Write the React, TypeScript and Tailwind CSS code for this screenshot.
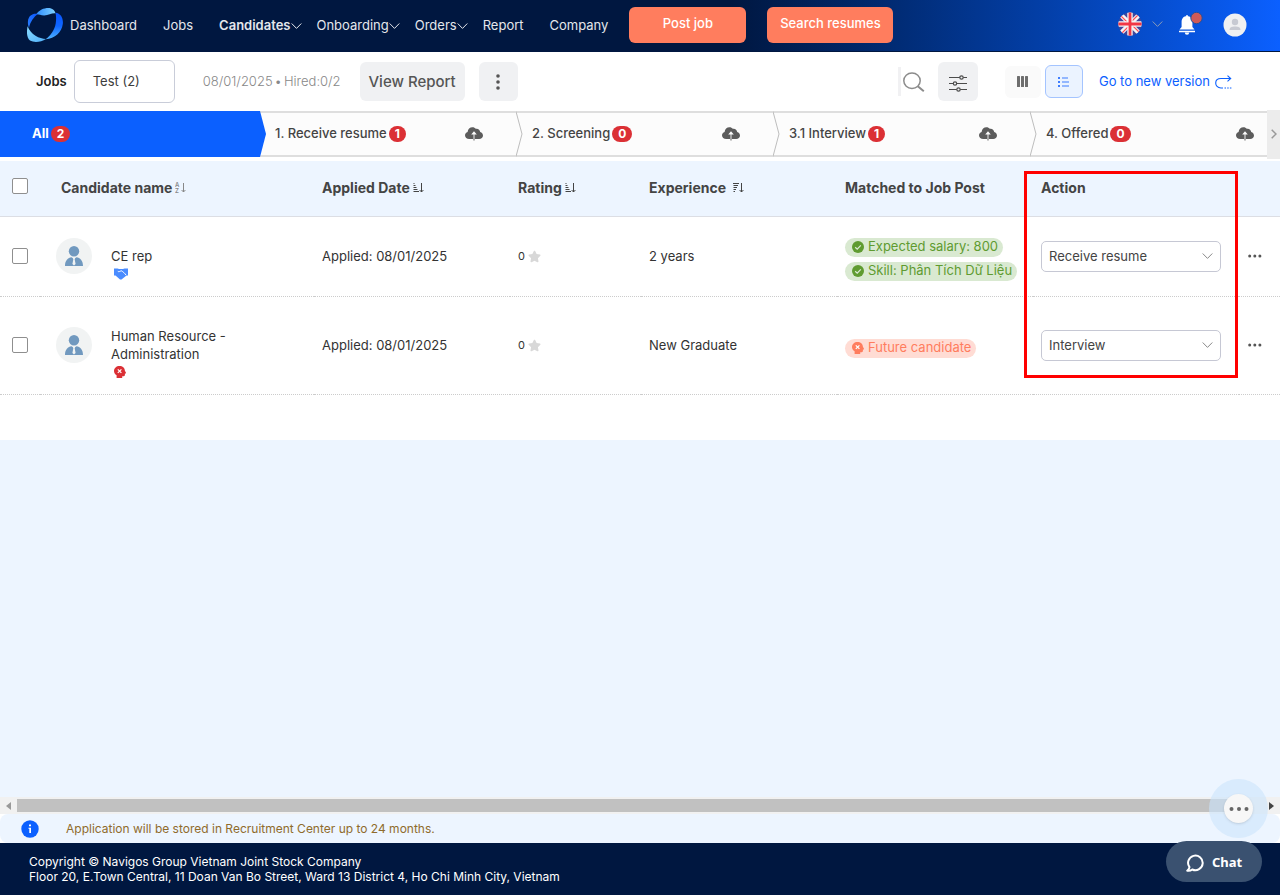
import React from "react";
import { FaStar } from "react-icons/fa";

function Chevron({ className = "" }: { className?: string }) {
  return (
    <svg viewBox="0 0 11 8" className={"h-2 w-[11px] shrink-0 " + className} fill="none" stroke="currentColor" strokeWidth="1">
      <path d="M0.7 1.5 L5.5 6.4 L10.3 1.5" />
    </svg>
  );
}

function Logo() {
  return (
    <svg viewBox="0 0 36 34" className="mb-px h-[34px] w-9 shrink-0">
      <defs>
        <linearGradient id="lgA" x1="0" x2="1" y1="0" y2="0">
          <stop offset="0" stopColor="#2f8dff" />
          <stop offset="1" stopColor="#7fd3ff" />
        </linearGradient>
        <linearGradient id="lgB" x1="0" x2="0" y1="0" y2="1">
          <stop offset="0" stopColor="#0a55ff" />
          <stop offset="0.5" stopColor="#0f66ff" />
          <stop offset="1" stopColor="#4fb4ff" />
        </linearGradient>
        <linearGradient id="lgC" x1="0" x2="1" y1="0" y2="1">
          <stop offset="0" stopColor="#8adcff" />
          <stop offset="1" stopColor="#4fb0fb" />
        </linearGradient>
        <linearGradient id="lgD" x1="1" x2="0" y1="0" y2="1">
          <stop offset="0" stopColor="#0b57ff" />
          <stop offset="1" stopColor="#2a80ff" />
        </linearGradient>
      </defs>
      <path d="M9.300 6.300C12.500 1.500 18 -0.500 23.500 0.200C26 0.700 27.800 2.800 28.600 5.400C25 4.800 21.500 7.600 17 7.500C13.500 7.400 11.500 6 9.300 6.300Z" fill="url(#lgA)" />
      <path d="M28.400 4.800C34 5.300 36.500 10.500 35.800 16C34.800 24 28 30.800 18.500 31.300C23.500 28 27.600 22 28.700 15.500C29.300 11.500 29.300 7.500 28.400 4.800Z" fill="url(#lgB)" />
      <path d="M0.600 18.300C2.300 22.500 5 25.500 8.500 27.800C12 30 15.500 30.800 19 31C14 34.200 7 34.800 3 32.500C-0.500 30 -0.500 23.500 0.600 18.300Z" fill="url(#lgC)" />
      <path d="M10.800 6C6.800 9 3.200 14 2 19.800C0.200 15.500 0.600 10.500 3.300 7.800C5.500 5.700 8.500 5.300 10.800 6Z" fill="url(#lgD)" />
    </svg>
  );
}

function Flag() {
  return (
    <svg viewBox="0 0 24 24" className="size-6 shrink-0">
      <clipPath id="flagClip">
        <circle cx="12" cy="12" r="11.600" />
      </clipPath>
      <g clipPath="url(#flagClip)">
        <rect width="24" height="24" fill="#41479b" />
        <path d="M0 0L24 24M24 0L0 24" stroke="#f5f5f5" strokeWidth="4.600" />
        <path d="M0 1L12 13M24 23L12 11M23 0L11 12M1 24L13 12" stroke="#ff4b55" strokeWidth="1.100" />
        <path d="M12 0V24M0 12H24" stroke="#f5f5f5" strokeWidth="5.400" />
        <path d="M12 0V24M0 12H24" stroke="#f23645" strokeWidth="2.800" />
      </g>
    </svg>
  );
}

function Bell() {
  return (
    <svg viewBox="0 0 26 24" className="h-6 w-[26px] shrink-0">
      <path d="M9 4C5.500 4 3.600 6.800 3.600 10V15L1.500 17.500H16.500L14.400 15V10C14.400 6.800 12.500 4 9 4Z" fill="#fff" />
      <path d="M7.800 4.500A1.200 1.500 0 0 1 10.200 4.500Z" fill="#fff" />
      <path d="M1 19.500H17" stroke="#fff" strokeWidth="1.500" />
      <path d="M6.800 20.500H11.200A2.200 2.200 0 0 1 6.800 20.500Z" fill="#fff" />
      <circle cx="18.500" cy="6" r="5.700" fill="#cf5a58" stroke="#23509c" strokeWidth="1" />
    </svg>
  );
}

function CloudUp() {
  return (
    <svg viewBox="0 0 18 14" className="h-[14px] w-[18px] shrink-0" fill="#5c5c5c">
      <path d="M4.200 12C1.800 12 0 10.500 0 8.300C0 6.600 1.100 5.300 2.600 4.900C2.900 2.200 4.800 0.300 7.400 0.300C9 0.300 10 1 10.800 1.800C13 1.300 14.900 2.700 15.200 4.900C16.900 5.400 18 6.800 18 8.500C18 10.600 16.300 12 14.200 12Z" />
      <path d="M9 4.300L11.800 7.400H9.900V12H8.100V7.400H6.200Z" fill="#fcfcfc" />
      <rect x="8.500" y="7.500" width="1" height="6" />
    </svg>
  );
}

function Handshake() {
  return (
    <svg viewBox="0 0 14 12" className="ml-[3px] h-3 w-[14px] shrink-0">
      <path d="M0 0.500H3.500L5 1H9L10.500 0.500H14V7.500H12.500L7.500 11.500H6L1.500 7.500H0Z" fill="#4a8cff" />
      <path d="M3.800 3.300C5 4.300 6.300 3 7.300 2.800C8.500 3.200 11 5.500 12 7" fill="none" stroke="#fff" strokeWidth="1" />
    </svg>
  );
}

function HeadX({ className = "" }: { className?: string }) {
  return (
    <svg viewBox="0 0 12 12" className={"size-3 shrink-0 " + className}>
      <path d="M5.500 0C8.600 0 10.800 2 10.900 4.700L12 6.800C12.100 7.200 11.900 7.400 11.500 7.400H10.900V9C10.900 9.700 10.400 10.200 9.700 10.200H8.200V12H2.600V9.300C1 8.300 0 6.900 0 5C0 2.100 2.400 0 5.500 0Z" fill="currentColor" />
      <path d="M3.800 3.300L7.400 6.900M7.400 3.300L3.800 6.900" stroke="#fff" strokeWidth="1.200" />
    </svg>
  );
}

function CheckCircle() {
  return (
    <svg viewBox="0 0 12 12" className="size-3 shrink-0">
      <circle cx="6" cy="6" r="6" fill="#5f9b30" />
      <path d="M3.200 6.200L5.200 8.100L8.800 4.300" fill="none" stroke="#dcebd5" strokeWidth="1.200" />
    </svg>
  );
}

type SortKind = "alpha" | "asc" | "desc";

function SortIcon({ kind }: { kind: SortKind }) {
  return (
    <svg viewBox="0 0 11 11" className="size-[11px] shrink-0" stroke="currentColor" fill="none" strokeWidth="1">
      {kind === "alpha" && (
        <g stroke="none" fill="currentColor" fontFamily="Inter, sans-serif" fontSize="6" fontWeight="600">
          <text x="0" y="5">A</text>
          <text x="0" y="11">Z</text>
        </g>
      )}
      {kind === "asc" && <path d="M0.500 1.500H1.500M0.500 3.500H2.500M0.500 5.500H3.500M0.500 7.500H4.500M0.500 9.500H6" />}
      {kind === "desc" && <path d="M0 1.500H6M0.500 3.500H5M0.500 5.500H4M0.500 7.500H3M0.500 9.500H2" />}
      <path d="M8.500 1V10M6.600 8L8.500 10L10.400 8" />
    </svg>
  );
}

function Avatar() {
  return (
    <svg viewBox="0 0 36 36" className="size-9 shrink-0">
      <circle cx="18" cy="18" r="18" fill="#f1f3f3" />
      <circle cx="18" cy="13.200" r="5.200" fill="#7199bf" />
      <path d="M9 28C9 22.500 12 19.800 15.500 19.300L18 21L20.500 19.300C24 19.800 27 22.500 27 28Z" fill="#7199bf" />
      <path d="M17 20H19L18.700 21.500L19.600 26L18 27.500L16.400 26L17.300 21.500Z" fill="#f1f3f3" />
    </svg>
  );
}

function Dots() {
  return (
    <svg viewBox="0 0 14 4" className="h-1 w-[14px]" fill="#555">
      <circle cx="1.700" cy="2" r="1.500" />
      <circle cx="6.800" cy="2" r="1.500" />
      <circle cx="11.900" cy="2" r="1.500" />
    </svg>
  );
}

const nav = [
  { label: "Dashboard" },
  { label: "Jobs" },
  { label: "Candidates", menu: true, active: true },
  { label: "Onboarding", menu: true },
  { label: "Orders", menu: true },
  { label: "Report" },
  { label: "Company" },
];

function Header() {
  return (
    <header className="flex h-13 items-center border-b border-[#001740] bg-linear-to-r from-[#001740] from-57% to-[#0b60ff] to-100% pr-[33px] pl-[27px] text-[13px] text-[#e4e7ec]">
      <Logo />
      <nav className="ml-[7px] flex items-center gap-[26px]">
        {nav.map((n) => (
          <a key={n.label} href="#" className={n.active ? "flex items-center font-semibold" : "flex items-center"}>
            {n.label}
            {n.menu && <Chevron className="-mr-[11px]" />}
          </a>
        ))}
      </nav>
      <div className="ml-[21px] flex gap-[21px] pb-[2px] font-medium text-white">
        <button className="h-9 w-[117px] rounded-md bg-[#ff7d5e] pb-[2px]">Post job</button>
        <button className="h-9 w-[126px] rounded-md bg-[#ff7d5e] pb-[2px]">Search resumes</button>
      </div>
      <div className="ml-auto flex items-center">
        <button aria-label="Language" className="flex items-center gap-[10px] pb-1 text-[#8c9cb8]">
          <Flag />
          <Chevron />
        </button>
        <button aria-label="Notifications" className="ml-[15px] pb-1">
          <Bell />
        </button>
        <button aria-label="Account" className="ml-[19px] pb-[2px]">
          <svg viewBox="0 0 24 24" className="size-6">
            <circle cx="12" cy="12" r="11.500" fill="#f0f1f2" />
            <circle cx="12" cy="9" r="3.200" fill="#c7cad2" />
            <path d="M6.500 17C6.500 14 9 13.500 12 13.500S17.500 14 17.500 17Z" fill="#c7cad2" />
          </svg>
        </button>
      </div>
    </header>
  );
}

function Toolbar() {
  return (
    <div className="flex h-[59px] items-center pr-12 pl-9 text-[13px] text-[#3c3c3c]">
      <span className="font-semibold text-[#222]">Jobs</span>
      <button className="ml-[7px] h-[43px] w-[101px] rounded-md border border-[#c9cdd9] pl-[18px] text-left">Test (2)</button>
      <span className="ml-7 flex gap-[2px] font-light text-[#888]">
        <span>08/01/2025</span>
        <span>•</span>
        <span>Hired:0/2</span>
      </span>
      <button className="ml-[19px] h-[39px] w-[105px] rounded-md bg-[#f0f1f3] pt-px text-[15px] font-medium text-[#555]">View Report</button>
      <button aria-label="More" className="ml-[14px] flex h-[39px] w-[39px] items-center justify-center rounded-md bg-[#f0f1f3]">
        <svg viewBox="0 0 4 16" className="h-4 w-1" fill="#555">
          <circle cx="2" cy="2" r="1.800" />
          <circle cx="2" cy="8" r="1.800" />
          <circle cx="2" cy="14" r="1.800" />
        </svg>
      </button>
      <div className="ml-auto flex items-center">
        <span className="h-[29px] w-[3px] bg-[#f1f1f3]" />
        <button aria-label="Search" className="ml-[2px]">
          <svg viewBox="0 0 22 20" className="h-5 w-[22px]" fill="none" stroke="#8c8c8c" strokeWidth="1.500">
            <ellipse cx="9" cy="8.700" rx="8.200" ry="7.800" />
            <path d="M14.800 14.300L20.800 19.200" strokeWidth="2" />
          </svg>
        </button>
        <button aria-label="Filter" className="ml-[13px] flex h-[39px] w-10 items-center justify-center rounded-md bg-[#f0f1f3]">
          <svg viewBox="0 0 18 17" className="mt-[3px] h-[17px] w-[18px]" fill="#f0f1f3" stroke="#4c4c4c" strokeWidth="1.200">
            <path d="M0 2.500H18M0 8.500H18M0 14.500H18" />
            <circle cx="12.500" cy="2.500" r="1.700" />
            <circle cx="6" cy="8.500" r="1.700" />
            <circle cx="9.500" cy="14.500" r="1.700" />
          </svg>
        </button>
        <button aria-label="Board view" className="ml-[27px] flex h-8 w-9 items-center justify-center rounded-md bg-[#fafafa]">
          <svg viewBox="0 0 11 11" className="size-[11px]" fill="#6e6e6e">
            <rect width="3" height="11" rx="0.500" />
            <rect x="4" width="3" height="11" rx="0.500" />
            <rect x="8" width="3" height="11" rx="0.500" />
          </svg>
        </button>
        <button aria-label="List view" className="ml-1 flex h-[33px] w-[38px] items-center justify-center rounded-md border border-[#a4c4ff] bg-[#ebf3ff]">
          <svg viewBox="0 0 11 10" className="h-[10px] w-[11px]" fill="#3d7dff">
            <rect width="2" height="2" />
            <rect y="4" width="2" height="2" />
            <rect y="8" width="2" height="2" />
            <path d="M4 0.500H10V1.500H4ZM4 4.500H11V5.500H4ZM4 8.500H11V9.500H4Z" />
          </svg>
        </button>
        <a href="#" className="ml-4 flex items-center gap-[5px] text-[#0b60ff]">
          Go to new version
          <svg viewBox="0 0 17 14" className="h-[14px] w-[17px]" fill="none" stroke="#0b60ff" strokeWidth="1.100">
            <path d="M15.500 3.500H6C2.500 3.500 0.700 5.500 0.700 8C0.700 10.500 2.500 13 6 13H8" />
            <path d="M12.500 0.700L15.700 3.500L12.500 6.300" />
            <path d="M9.500 13H17" strokeDasharray="1.500 1.200" />
          </svg>
        </a>
      </div>
    </div>
  );
}

function Badge({ children }: { children: React.ReactNode }) {
  return (
    <span className="ml-[2px] inline-flex h-4 items-center rounded-full bg-[#db3035] px-[6px] text-[12px] font-bold text-white">
      {children}
    </span>
  );
}

const stages = [
  { label: "1. Receive resume", count: 1 },
  { label: "2. Screening", count: 0 },
  { label: "3.1 Interview", count: 1 },
  { label: "4. Offered", count: 0 },
];

function Stages() {
  return (
    <div className="flex h-[46px] items-center text-[13px] font-medium text-[#444]">
      <div className="flex h-full min-w-0 flex-1 overflow-hidden">
        <button className="flex h-full w-[259px] shrink-0 items-center bg-[#0b60ff] pl-8 font-bold text-white">
          All <Badge>2</Badge>
        </button>
        {stages.map((s, i) => (
          <div key={s.label} className="flex w-[257px] shrink-0 items-center border-y-2 border-[#dedede] bg-[#fcfcfc]">
            <svg viewBox="0 0 7 46" className="-my-0.5 h-[46px] w-[7px] shrink-0">
              {i === 0 ? <path d="M0 0H1L7 23L1 46H0Z" fill="#0b60ff" /> : <path d="M0 0.500L6 23L0 45.500" fill="none" stroke="#bdbdbd" />}
            </svg>
            <span className="ml-[9px]">{s.label}</span>
            <Badge>{s.count}</Badge>
            <button aria-label={"Upload to " + s.label} className="mr-[33px] ml-auto">
              <CloudUp />
            </button>
          </div>
        ))}
      </div>
      <button aria-label="Next stages" className="-my-1 flex h-[49px] w-[13px] items-center justify-center bg-[#ececec]">
        <svg viewBox="0 0 6 10" className="h-[10px] w-[6px]" fill="none" stroke="#999" strokeWidth="1.500">
          <path d="M0.700 0.700L5 5L0.700 9.300" />
        </svg>
      </button>
    </div>
  );
}

function Check({ label }: { label: string }) {
  return (
    <input
      type="checkbox"
      aria-label={label}
      className="block size-4 appearance-none rounded-[2px] border border-[#8f8f8f] bg-white checked:bg-[#0b60ff]"
    />
  );
}

function Th({ children, sort, gap = "gap-[3px]" }: { children: string; sort?: SortKind; gap?: string }) {
  return (
    <th scope="col" className="px-2 pb-[2px] text-left font-bold">
      <div className={"flex items-center " + gap}>
        {children}
        {sort && <SortIcon kind={sort} />}
      </div>
    </th>
  );
}

const rows = [
  {
    name: "CE rep",
    icon: <Handshake />,
    exp: "2 years",
    stage: "Receive resume",
    tags: ["Expected salary: 800", "Skill: Phân Tích Dữ Liệu"],
    future: false,
  },
  {
    name: "Human Resource - Administration",
    icon: <HeadX className="ml-[3px] text-[#db3035]" />,
    exp: "New Graduate",
    stage: "Interview",
    tags: ["Future candidate"],
    future: true,
  },
];

function CandidateTable() {
  return (
    <table className="w-full table-fixed border-collapse text-[13px] text-[#333]">
      <colgroup>
        <col className="w-10" />
        <col />
        <col className="w-[196px]" />
        <col className="w-[131px]" />
        <col className="w-[196px]" />
        <col className="w-[196px]" />
        <col className="w-[206px]" />
        <col className="w-[41px]" />
      </colgroup>
      <thead>
        <tr className="h-[55px] border-b border-[#dcdee4] bg-[#edf5ff] text-[14px] text-[#444]">
          <td className="pb-1 pl-3">
            <Check label="Select all candidates" />
          </td>
          <th scope="col" className="pb-[2px] pl-[21px] text-left font-bold">
            <div className="flex items-center gap-[3px]">
              Candidate name
              <span className="text-[#888]">
                <SortIcon kind="alpha" />
              </span>
            </div>
          </th>
          <Th sort="asc">Applied Date</Th>
          <Th sort="asc">Rating</Th>
          <Th sort="desc" gap="gap-[7px]">Experience</Th>
          <Th>Matched to Job Post</Th>
          <Th>Action</Th>
          <td />
        </tr>
      </thead>
      <tbody>
        {rows.map((r) => (
          <tr key={r.name} className="border-b border-dotted border-[#ccc]">
            <td className="pl-3">
              <Check label={"Select " + r.name} />
            </td>
            <td className="pt-3 pb-[13px] pl-4">
              <div className="flex items-center gap-[19px]">
                <Avatar />
                <div className="w-[130px] pt-[18px] leading-[18px]">
                  <a href="#" className="block">{r.name}</a>
                  <div className="flex h-[18px] items-center">{r.icon}</div>
                </div>
              </div>
            </td>
            <td className="px-2 pt-[2px]">Applied: 08/01/2025</td>
            <td className="px-2">
              <div className="flex items-center gap-[3px] text-[11px]">
                0 <FaStar className="size-[13px] text-[#d8d8d8]" />
              </div>
            </td>
            <td className="px-2 pt-[2px]">{r.exp}</td>
            <td className="pt-[6px] pl-2">
              <div className="flex flex-col items-start gap-[5px] whitespace-nowrap">
                {r.tags.map((t) => (
                  <span
                    key={t}
                    className={
                      "flex h-[19px] items-center gap-1 rounded-full pr-[5px] pl-[7px] " +
                      (r.future ? "bg-[#ffdcd4] text-[#ff7d5e]" : "bg-[#d9e9d1] text-[#5f9b30]")
                    }
                  >
                    {r.future ? <HeadX /> : <CheckCircle />}
                    {t}
                  </span>
                ))}
              </div>
            </td>
            <td className="px-2">
              <div className="relative w-[180px]">
                <select
                  aria-label={"Stage for " + r.name}
                  defaultValue={r.stage}
                  className="block h-[31px] w-full appearance-none rounded-[5px] border border-[#c6c8d4] bg-white pt-px pl-[7px] text-[#444]"
                >
                  <option>Receive resume</option>
                  <option>Screening</option>
                  <option>Interview</option>
                  <option>Offered</option>
                </select>
                <Chevron className="pointer-events-none absolute top-[11px] right-2 text-[#888]" />
              </div>
            </td>
            <td className="pl-[9px]">
              <button aria-label={"More actions for " + r.name} className="block">
                <Dots />
              </button>
            </td>
          </tr>
        ))}
      </tbody>
    </table>
  );
}

export default function App() {
  return (
    <div className="relative flex min-h-screen flex-col bg-white font-['Inter',sans-serif]">
      <Header />
      <Toolbar />
      <Stages />
      <main className="relative mt-1 flex flex-1 flex-col bg-[#edf5ff]">
        <div className="bg-white pb-[45px]">
          <CandidateTable />
        </div>
        <div className="pointer-events-none absolute top-[10px] right-[42px] h-[207px] w-[214px] border-3 border-[#ff0000]" />
      </main>
      <div className="flex h-[17px] items-center justify-between bg-[#f1f1f1] px-[6px]">
        <svg viewBox="0 0 5 8" className="h-2 w-[5px]" fill="#999">
          <path d="M5 0V8L0 4Z" />
        </svg>
        <div className="mr-[34px] ml-[6px] h-[13px] flex-1 bg-[#c1c1c1]" />
        <svg viewBox="0 0 5 8" className="h-2 w-[5px]" fill="#444">
          <path d="M0 0V8L5 4Z" />
        </svg>
      </div>
      <div className="flex h-[29px] items-center gap-[27px] rounded-lg bg-[#edf5ff] pl-[21px] text-[12px] text-[#8f6b2c]">
        <svg viewBox="0 0 18 18" className="size-[18px]">
          <circle cx="9" cy="9" r="8.700" fill="#0b60ff" />
          <path d="M8 4.500H10V6.300H8ZM7.500 7.700H10V13H8.300V8.800H7.500Z" fill="#fff" />
        </svg>
        Application will be stored in Recruitment Center up to 24 months.
      </div>
      <footer className="flex h-13 flex-col justify-center bg-[#001740] pl-[29px] text-[12px] leading-[15px] text-white">
        <p>Copyright © Navigos Group Vietnam Joint Stock Company</p>
        <p>Floor 20, E.Town Central, 11 Doan Van Bo Street, Ward 13 District 4, Ho Chi Minh City, Vietnam</p>
      </footer>
      <div className="absolute right-3 bottom-[57px] flex size-[59px] items-center justify-center rounded-full bg-[#cce4fb]/60">
        <button aria-label="Quick actions" className="flex size-[29px] items-center justify-center rounded-full bg-[#f7f7f7] shadow">
          <svg viewBox="0 0 20 4" className="h-1 w-5" fill="#666">
            <circle cx="2.500" cy="2" r="2" />
            <circle cx="10" cy="2" r="2" />
            <circle cx="17.500" cy="2" r="2" />
          </svg>
        </button>
      </div>
      <button className="absolute right-[18px] bottom-[13px] flex h-[41px] w-24 items-center justify-center gap-2 rounded-full bg-[#3a5170] pt-[2px] font-['Noto_Sans',sans-serif] text-[13px] font-bold text-white">
        <svg viewBox="0 0 18 18" className="size-[18px]" fill="none" stroke="#fff" strokeWidth="2" strokeLinejoin="round">
          <path d="M3.500 13.200A7.300 7.300 0 1 1 6.300 15.500C5 16.500 3 17 1.200 16.700C2.500 15.700 3.300 14.600 3.500 13.200Z" />
        </svg>
        Chat
      </button>
    </div>
  );
}
